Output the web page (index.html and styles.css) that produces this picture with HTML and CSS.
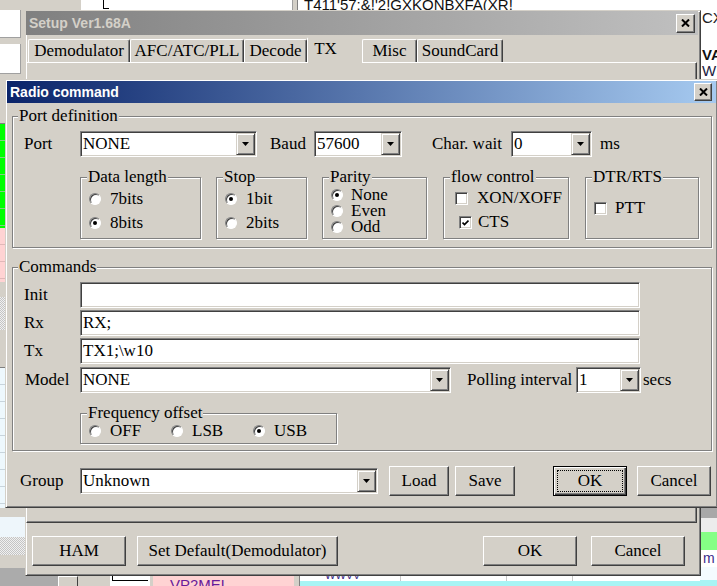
FILE: index.html
```html
<!DOCTYPE html>
<html>
<head>
<meta charset="utf-8">
<title>Radio command</title>
<link rel="stylesheet" href="styles.css">
</head>
<body>
<div class="desktop">
  <div class="app">
    <div class="lcol">
      <div class="lb lb-top"></div>
      <div class="lb lb-field1"></div>
      <div class="lb lb-sep"></div>
      <div class="lb lb-field2"></div>
      <div class="lb lb-gray1"></div>
      <div class="lb lb-head"></div>
      <div class="lb lb-green"></div>
      <div class="lb lb-pink"></div>
      <div class="lb lb-gray2"></div>
      <div class="lb lb-hatch1"></div>
      <div class="lb lb-gray3"></div>
      <div class="lb lb-head2"></div>
      <div class="lb lb-light"></div>
      <div class="lb lb-gray4"></div>
      <div class="lb lb-light2"></div>
      <div class="lb lb-hatch2"></div>
      <div class="lb lb-gray5"></div>
      <div class="lb lb-dark"></div>
    </div>
    <div class="mcol">
      <div class="mtop">
        <div class="mt-gray"></div>
        <div class="mt-tree"><span class="tick"></span></div>
        <div class="mt-div"></div>
        <div class="mt-text"><span class="mt-line">T411'57;&amp;!'2!GXKONBXFA(XR!</span></div>
      </div>
      <div class="mmid"></div>
      <div class="mbot">
        <div class="mb-dark"></div>
        <div class="mb-btn"></div>
        <div class="mb-gray"></div>
        <div class="mb-tree"><span class="branch"></span></div>
        <div class="mb-sep"></div>
        <div class="mb-pink"><span class="mb-call">VP2MEL</span></div>
        <div class="mb-div"></div>
        <div class="mb-grid"><span class="wwv">WWVV</span></div>
      </div>
    </div>
    <div class="rcol">
      <div class="rtop">
        <span class="rt-cx">CX</span>
        <span class="rt-va">VA</span>
        <span class="rt-wn">WN</span>
      </div>
      <div class="rmid"></div>
      <div class="rb rb-gray"></div>
      <div class="rb rb-light"></div>
      <div class="rb rb-green"></div>
      <div class="rb rb-m">m</div>
      <div class="rb rb-white"></div>
      <div class="rb rb-cyan"></div>
    </div>
  </div>

  <div class="win setup">
    <div class="caption inactive">
      <span class="cap-title">Setup Ver1.68A</span>
      <span class="cap-close big"><svg width="9" height="8" viewBox="0 0 9 8"><path d="M1 0.5 L8 7.5 M8 0.5 L1 7.5" stroke="#000" stroke-width="2"/></svg></span>
    </div>
    <div class="tabs">
      <span class="tab t-demod">Demodulator</span>
      <span class="tab t-afc">AFC/ATC/PLL</span>
      <span class="tab t-decode">Decode</span>
      <span class="tab t-tx sel">TX</span>
      <span class="tab t-misc">Misc</span>
      <span class="tab t-sound">SoundCard</span>
    </div>
    <div class="tabpage"></div>
    <div class="setup-btns">
      <div class="btn b-ham">HAM</div>
      <div class="btn b-setdef">Set Default(Demodulator)</div>
      <div class="btn b-ok2">OK</div>
      <div class="btn b-cancel2">Cancel</div>
    </div>
  </div>

  <div class="win dlg">
    <div class="caption active">
      <span class="cap-title">Radio command</span>
      <span class="cap-close"><svg width="9" height="8" viewBox="0 0 9 8"><path d="M1 0.5 L8 7.5 M8 0.5 L1 7.5" stroke="#000" stroke-width="2"/></svg></span>
    </div>
    <div class="dlg-body">
      <div class="group main g-port">
        <span class="legend">Port definition</span>
        <div class="row r-port">
          <span class="lbl l-port">Port</span>
          <div class="combo c-port"><span class="val">NONE</span><span class="drop"><svg width="7" height="4" viewBox="0 0 7 4"><path d="M0 0H7L3.5 4Z" fill="#000"/></svg></span></div>
          <span class="lbl l-baud">Baud</span>
          <div class="combo c-baud"><span class="val">57600</span><span class="drop"><svg width="7" height="4" viewBox="0 0 7 4"><path d="M0 0H7L3.5 4Z" fill="#000"/></svg></span></div>
          <span class="lbl l-wait">Char. wait</span>
          <div class="combo c-wait"><span class="val">0</span><span class="drop"><svg width="7" height="4" viewBox="0 0 7 4"><path d="M0 0H7L3.5 4Z" fill="#000"/></svg></span></div>
          <span class="lbl l-ms">ms</span>
        </div>
        <div class="row r-sub">
          <div class="group sub g-data">
            <span class="legend">Data length</span>
            <div class="opt"><span class="radio"></span><span>7bits</span></div>
            <div class="opt"><span class="radio on"></span><span>8bits</span></div>
          </div>
          <div class="group sub g-stop">
            <span class="legend">Stop</span>
            <div class="opt"><span class="radio on"></span><span>1bit</span></div>
            <div class="opt"><span class="radio"></span><span>2bits</span></div>
          </div>
          <div class="group sub g-parity">
            <span class="legend">Parity</span>
            <div class="opt"><span class="radio on"></span><span>None</span></div>
            <div class="opt"><span class="radio"></span><span>Even</span></div>
            <div class="opt"><span class="radio"></span><span>Odd</span></div>
          </div>
          <div class="group sub g-flow">
            <span class="legend">flow control</span>
            <div class="opt"><span class="check"></span><span>XON/XOFF</span></div>
            <div class="opt"><span class="check cts"><svg width="7" height="7" viewBox="0 0 7 7"><path d="M0.5 3.5 L2.5 5.5 L6.5 1.5" fill="none" stroke="#000" stroke-width="1.7"/></svg></span><span>CTS</span></div>
          </div>
          <div class="group sub g-dtr">
            <span class="legend">DTR/RTS</span>
            <div class="opt"><span class="check"></span><span>PTT</span></div>
          </div>
        </div>
      </div>

      <div class="group main g-cmd">
        <span class="legend">Commands</span>
        <div class="row r-cmd">
          <span class="lbl l-cmd">Init</span>
          <div class="edit"></div>
        </div>
        <div class="row r-cmd">
          <span class="lbl l-cmd">Rx</span>
          <div class="edit">RX;</div>
        </div>
        <div class="row r-cmd">
          <span class="lbl l-cmd">Tx</span>
          <div class="edit">TX1;\w10</div>
        </div>
        <div class="row r-model">
          <span class="lbl l-cmd l-model">Model</span>
          <div class="combo c-model"><span class="val">NONE</span><span class="drop"><svg width="7" height="4" viewBox="0 0 7 4"><path d="M0 0H7L3.5 4Z" fill="#000"/></svg></span></div>
          <span class="lbl l-poll">Polling interval</span>
          <div class="combo c-poll"><span class="val">1</span><span class="drop"><svg width="7" height="4" viewBox="0 0 7 4"><path d="M0 0H7L3.5 4Z" fill="#000"/></svg></span></div>
          <span class="lbl l-secs">secs</span>
        </div>
        <div class="group sub g-freq">
          <span class="legend">Frequency offset</span>
          <div class="freq-row">
            <div class="opt fopt"><span class="radio"></span><span>OFF</span></div>
            <div class="opt fopt"><span class="radio"></span><span>LSB</span></div>
            <div class="opt fopt"><span class="radio on"></span><span>USB</span></div>
          </div>
        </div>
      </div>

      <div class="row r-group">
        <span class="lbl l-group">Group</span>
        <div class="combo c-group"><span class="val">Unknown</span><span class="drop"><svg width="7" height="4" viewBox="0 0 7 4"><path d="M0 0H7L3.5 4Z" fill="#000"/></svg></span></div>
        <div class="btn b-load">Load</div>
        <div class="btn b-save">Save</div>
        <div class="btn def b-ok">OK</div>
        <div class="btn b-cancel">Cancel</div>
      </div>
    </div>
  </div>
</div>
</body>
</html>
```

FILE: styles.css
```css
* { box-sizing: border-box; }
html, body { margin: 0; padding: 0; }
body {
  width: 717px;
  height: 586px;
  overflow: hidden;
  background: #d4d0c8;
  font-family: "Liberation Serif", "Times New Roman", serif;
  font-size: 17px;
  color: #000;
}
.desktop { position: relative; width: 717px; height: 586px; overflow: hidden; }

/* ---------- background application ---------- */
.app { display: grid; grid-template-columns: 25px 675px 17px; height: 586px; }
.lcol, .mcol, .rcol { display: flex; flex-direction: column; min-width: 0; overflow: hidden; }
.lb, .rb { flex: none; }

.lb-top { height: 10px; background: #d4d0c8; }
.lb-field1 { height: 28px; background: #fff; margin-right: 4px; border-right: 1px solid #a0a0a0; border-bottom: 1px solid #a0a0a0; }
.lb-sep { height: 6px; background: #d4d0c8; }
.lb-field2 { height: 30px; background: #fff; margin-right: 4px; border-right: 1px solid #a0a0a0; border-bottom: 1px solid #a0a0a0; }
.lb-gray1 { height: 36px; background: #d4d0c8; }
.lb-head { height: 14px; background: #d4d0c8; border-bottom: 1px solid #808080; }
.lb-green { height: 104px; background: repeating-linear-gradient(to bottom, #00ff00 0 16px, #7fd27f 16px 17px); }
.lb-pink { height: 54px; background: repeating-linear-gradient(to bottom, #ffd3d3 0 16px, #e0b8b8 16px 17px); }
.lb-gray2 { height: 15px; background: #d4d0c8; }
.lb-hatch1 { height: 33px; background: repeating-conic-gradient(#c4c4c4 0 25%, #f0f0f0 0 50%) 0 0 / 2px 2px; }
.lb-gray3 { height: 22px; background: #d4d0c8; }
.lb-head2 { height: 16px; background: #d4d0c8; border-bottom: 1px solid #808080; }
.lb-light { height: 140px; background: repeating-linear-gradient(to bottom, #eef8fd 0 16px, #c8d4dc 16px 17px); }
.lb-gray4 { height: 9px; background: #d4d0c8; }
.lb-light2 { height: 20px; background: #eef6fb; }
.lb-hatch2 { height: 18px; background: repeating-conic-gradient(#c4c4c4 0 25%, #f0f0f0 0 50%) 0 0 / 2px 2px; }
.lb-gray5 { height: 13px; background: #d4d0c8; }
.lb-dark { height: 18px; background: #ababab; }

.mtop { height: 10px; display: flex; flex: none; overflow: hidden; }
.mt-gray { width: 57px; background: #d4d0c8; border-right: 1px solid #fff; flex: none; }
.mt-tree { width: 211px; background: #fff; flex: none; padding-left: 24px; border-right: 1px solid #a0a0a0; }
.tick { display: block; width: 6px; height: 9px; border-left: 1px solid #000; border-bottom: 1px solid #000; margin-left: -3px; }
.mt-div { width: 5px; background: #d4d0c8; border-right: 1px solid #808080; flex: none; }
.mt-text { flex: 1; background: #fff; padding-left: 6px; overflow: hidden; }
.mt-line { display: block; margin-top: -3px; font-family: "Liberation Sans", Arial, sans-serif; font-size: 15px; line-height: 15px; color: #101010; white-space: nowrap; }
.mmid { flex: 1; background: #d4d0c8; }
.mbot { height: 10px; display: flex; flex: none; overflow: hidden; }
.mb-dark { width: 33px; background: #ababab; flex: none; }
.mb-btn { width: 20px; background: #d4d0c8; border-top: 1px solid #fff; border-left: 1px solid #fff; border-right: 1px solid #404040; flex: none; }
.mb-gray { width: 32px; background: #d4d0c8; flex: none; }
.mb-tree { width: 40px; background: #fff; flex: none; padding-left: 2px; }
.branch { display: block; width: 36px; height: 5px; border-left: 1px solid #000; border-bottom: 1px solid #000; }
.mb-sep { width: 3px; background: #d4d0c8; flex: none; }
.mb-pink { width: 141px; background: #ffd3d3; flex: none; padding-left: 17px; overflow: hidden; }
.mb-call { display: block; margin-top: 1px; font-family: "Liberation Sans", Arial, sans-serif; font-size: 15px; line-height: 15px; color: #6a1a9a; }
.mb-div { width: 6px; background: #d4d0c8; border-right: 1px solid #808080; flex: none; }
.mb-grid {
  flex: 1; overflow: hidden; padding-left: 25px;
  background:
    linear-gradient(to bottom, transparent 0 5px, #a8f4f4 5px 10px),
    linear-gradient(to right, transparent 0 100px, #c8c8c8 100px 101px, transparent 101px 206px, #c8c8c8 206px 207px, transparent 207px 272px, #c8c8c8 272px 273px, transparent 273px),
    #fff;
}
.wwv { display: block; margin-top: -6px; font-family: "Liberation Sans", Arial, sans-serif; font-size: 11px; line-height: 11px; color: #3a2a8a; }

.rtop { height: 79px; background: #fff; display: flex; flex-direction: column; padding-left: 2px; flex: none; font-family: "Liberation Sans", Arial, sans-serif; font-size: 15px; line-height: 16px; white-space: nowrap; overflow: hidden; }
.rt-cx { margin-top: 10px; color: #202020; }
.rt-va { margin-top: 21px; font-weight: bold; color: #101010; }
.rt-wn { color: #202040; }
.rmid { height: 429px; flex: none; background: #d4d0c8; }
.rb-gray { height: 10px; background: #a8a8a8; }
.rb-light { height: 14px; background: #ececec; }
.rb-green { height: 18px; background: #85ff85; }
.rb-m { height: 17px; background: #fff; padding-left: 3px; font-family: "Liberation Sans", Arial, sans-serif; font-size: 14px; line-height: 17px; color: #3a2a8a; }
.rb-white { height: 13px; background: #f4fbff; }
.rb-cyan { height: 6px; background: #a8f4f4; }

/* ---------- windows ---------- */
.win {
  position: absolute;
  background: #d4d0c8;
  border: 1px solid;
  border-color: #d4d0c8 #404040 #404040 #d4d0c8;
  box-shadow: inset 1px 1px 0 #fff, inset -1px -1px 0 #808080;
  display: flex;
  flex-direction: column;
}
.setup { left: 25px; top: 10px; width: 676px; height: 566px; padding: 0 2px 2px 0; }
.dlg { left: 5px; top: 79px; width: 713px; height: 429px; padding: 1px; }

.caption {
  flex: none;
  height: 24px;
  display: flex;
  align-items: center;
  padding-left: 3px;
  font-family: "Liberation Sans", Arial, sans-serif;
  font-weight: bold;
  font-size: 14px;
}
.caption.inactive { background: linear-gradient(to right, #808080, #c0c0c0); color: #d4d0c8; }
.caption.active { height: 22px; background: linear-gradient(to right, #0a246a, #a6caf0); color: #fff; }
.cap-title { flex: 1; white-space: nowrap; }
.cap-close {
  flex: none;
  width: 18px;
  height: 18px;
  margin-right: 4px;
  background: #d4d0c8;
  border: 1px solid;
  border-color: #fff #404040 #404040 #fff;
  box-shadow: inset -1px -1px 0 #808080;
  display: flex;
  align-items: center;
  justify-content: center;
}
.cap-close.big { width: 19px; height: 19px; margin-right: 3px; }

/* tabs */
.tabs { flex: none; display: flex; align-items: flex-end; height: 25px; margin-top: 2px; padding-left: 2px; }
.tab {
  flex: none;
  height: 23px;
  display: flex;
  align-items: center;
  justify-content: center;
  border-top: 1px solid #fff;
  border-left: 1px solid #fff;
  border-right: 1px solid #404040;
  box-shadow: inset -1px 0 0 #808080;
  border-radius: 2px 2px 0 0;
  white-space: nowrap;
  background: #d4d0c8;
}
.tab.sel {
  height: 26px;
  margin-bottom: -1px;
  padding: 0 18px 4px 0;
  position: relative;
  z-index: 1;
  border-top-color: #d4d0c8;
  border-right-color: #d4d0c8;
  box-shadow: none;
}
.t-demod { width: 102px; }
.t-afc { width: 114px; }
.t-decode { width: 63px; }
.t-tx { width: 55px; }
.t-misc { width: 55px; }
.t-sound { width: 86px; }
.tabpage {
  flex: none;
  height: 461px;
  margin-right: 1px;
  border: 1px solid;
  border-color: #fff #404040 #404040 #fff;
  box-shadow: inset -1px -1px 0 #808080;
}
.setup-btns { flex: none; display: flex; margin-top: 13px; height: 30px; padding: 0 13px 0 6px; }
.b-ham { width: 94px; }
.b-setdef { width: 201px; margin-left: 11px; }
.b-ok2 { width: 94px; margin-left: auto; }
.b-cancel2 { width: 94px; margin-left: 14px; }

/* controls */
.btn {
  flex: none;
  height: 30px;
  display: flex;
  align-items: center;
  justify-content: center;
  background: #d4d0c8;
  border: 1px solid;
  border-color: #fff #404040 #404040 #fff;
  box-shadow: inset -1px -1px 0 #808080;
  white-space: nowrap;
}
.btn.def {
  position: relative;
  border-color: #000;
  box-shadow: inset 1px 1px 0 #fff, inset -1px -1px 0 #404040, inset -2px -2px 0 #808080;
}
.btn.def::after { content: ""; position: absolute; inset: 3px 3px 3px 3px; border: 1px dotted #000; }

.dlg-body { flex: 1; display: flex; flex-direction: column; padding: 13px 4px 0 5px; }
.group {
  position: relative;
  flex: none;
  border: 1px solid #808080;
  box-shadow: 1px 1px 0 #fff, inset 1px 1px 0 #fff;
}
.legend {
  position: absolute;
  top: -11px;
  left: 6px;
  padding: 0 1px;
  line-height: 20px;
  background: #d4d0c8;
  white-space: nowrap;
}
.group.main > .legend { left: 5px; }

.row { display: flex; align-items: center; flex: none; }
.lbl { flex: none; white-space: nowrap; }

.g-port { height: 132px; padding: 14px 0 0 11px; display: flex; flex-direction: column; }
.r-port { height: 26px; }
.l-port { width: 56px; }
.c-port { width: 177px; }
.l-baud { width: 44px; margin-left: 13px; }
.c-baud { width: 88px; }
.l-wait { width: 79px; margin-left: 30px; }
.c-wait { width: 81px; }
.l-ms { margin-left: 8px; }

.r-sub { margin-top: 20px; margin-left: 56px; height: 62px; align-items: stretch; }
.sub { height: 62px; padding: 9px 0 0 8px; }
.g-data { width: 121px; }
.g-stop { width: 91px; margin-left: 15px; }
.g-parity { width: 105px; margin-left: 15px; }
.g-flow { width: 126px; margin-left: 16px; padding: 8px 0 0 11px; }
.g-dtr { width: 114px; margin-left: 16px; padding: 18px 0 0 8px; }

.opt { display: flex; align-items: center; height: 24px; line-height: 20px; white-space: nowrap; }
.radio {
  flex: none;
  width: 12px;
  height: 12px;
  margin-right: 9px;
  border-radius: 50%;
  background: #fff;
  border: 1px solid;
  border-color: #808080 #fff #fff #808080;
  box-shadow: inset 1px 1px 0 #404040;
  display: flex;
  align-items: center;
  justify-content: center;
}
.radio.on::after { content: ""; width: 4px; height: 4px; border-radius: 50%; background: #000; }
.g-parity .opt { height: 16px; line-height: 16px; }
.g-parity .radio { margin-right: 8px; }

.check {
  flex: none;
  width: 13px;
  height: 13px;
  margin-right: 9px;
  background: #fff;
  border: 1px solid;
  border-color: #808080 #fff #fff #808080;
  box-shadow: inset 1px 1px 0 #404040, inset -1px -1px 0 #d4d0c8;
  display: flex;
  align-items: center;
  justify-content: center;
}
.check.cts { margin-left: 4px; margin-right: 6px; }
.g-dtr .check { margin-right: 8px; }

.combo {
  flex: none;
  display: flex;
  height: 26px;
  background: #fff;
  border: 1px solid;
  border-color: #808080 #fff #fff #808080;
  box-shadow: inset 1px 1px 0 #404040, inset -1px -1px 0 #d4d0c8;
  padding: 1px;
}
.combo .val { flex: 1; padding-left: 1px; line-height: 22px; white-space: nowrap; overflow: hidden; }
.drop {
  flex: none;
  width: 19px;
  background: #d4d0c8;
  border: 1px solid;
  border-color: #d4d0c8 #404040 #404040 #d4d0c8;
  box-shadow: inset 1px 1px 0 #fff, inset -1px -1px 0 #808080;
  display: flex;
  align-items: center;
  justify-content: center;
}

.g-cmd { margin-top: 19px; height: 184px; padding: 14px 0 0 11px; display: flex; flex-direction: column; }
.r-cmd { height: 26px; margin-bottom: 2px; }
.l-cmd { width: 56px; }
.l-model { padding-left: 1px; }
.edit {
  flex: none;
  width: 560px;
  height: 26px;
  background: #fff;
  border: 1px solid;
  border-color: #808080 #fff #fff #808080;
  box-shadow: inset 1px 1px 0 #404040, inset -1px -1px 0 #d4d0c8;
  padding: 1px 1px 1px 2px;
  line-height: 22px;
  white-space: nowrap;
}
.r-model { height: 26px; margin-top: 1px; }
.c-model { width: 371px; }
.l-poll { width: 109px; margin-left: 16px; }
.c-poll { width: 65px; }
.l-secs { margin-left: 2px; }

.g-freq { width: 257px; height: 31px; margin-top: 20px; margin-left: 56px; padding: 9px 0 0 8px; }
.freq-row { display: flex; }
.fopt { width: 82px; height: 16px; line-height: 16px; }

.r-group { height: 30px; margin-top: 15px; padding-left: 8px; }
.l-group { width: 60px; }
.c-group { width: 298px; }
.b-load { width: 60px; margin-left: 11px; }
.b-save { width: 60px; margin-left: 6px; }
.b-ok { width: 74px; margin-left: 38px; }
.b-cancel { width: 74px; margin-left: 10px; }
```
